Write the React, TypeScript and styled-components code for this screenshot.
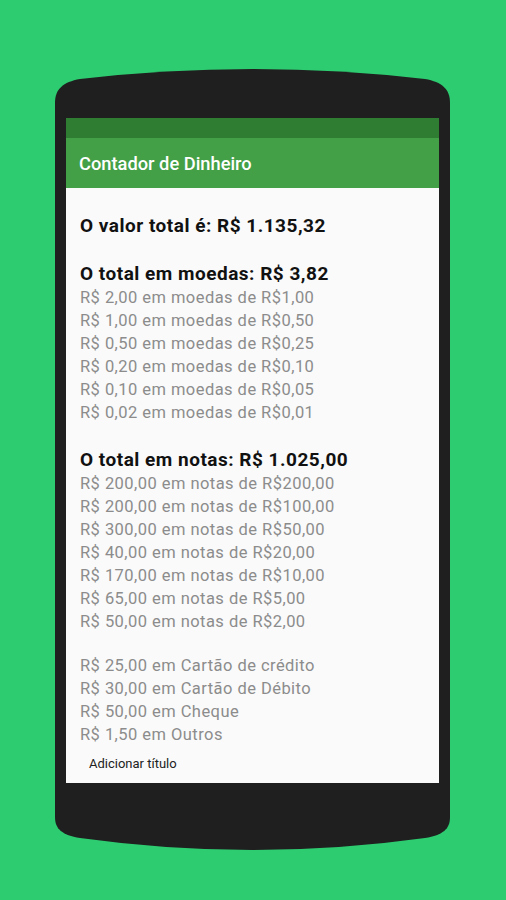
import React from "react";
import styled, { createGlobalStyle } from "styled-components";

const Global = createGlobalStyle`
  html, body { margin: 0; padding: 0; background: #2ecc71; }
  body { font-family: Roboto, "Noto Sans", "Liberation Sans", sans-serif; }
`;

const Page = styled.div`
  width: 506px;
  height: 900px;
  background: #2ecc71;
  padding: 69px 56px 0 55px;
  box-sizing: border-box;
  overflow: hidden;
`;

const Phone = styled.div`
  width: 395px;
  height: 781px;
  background: #1f1f1f;
  clip-path: path("M0,34 C0,20 8,13 25,10 Q197.5,-10 370,10 C387,13 395,20 395,34 L395,748 C395,760 388,766 370,769 Q197.5,793 25,769 C7,766 0,760 0,748 Z");
  padding: 49px 11px 0 11px;
  box-sizing: border-box;
`;

const Screen = styled.div`
  height: 665px;
  display: flex;
  flex-direction: column;
  background: #fafafa;
`;

const StatusBar = styled.div`
  height: 20px;
  background: #2e7d32;
`;

const AppBar = styled.div`
  height: 50px;
  background: #43a047;
  display: flex;
  align-items: center;
  padding-left: 13px;
  color: #ffffff;
  font-size: 18.3px;
  font-weight: 500;
`;

const Content = styled.div`
  padding: 26px 0 0 14px;
  display: flex;
  flex-direction: column;
`;

const Heading = styled.div<{ $gap?: number }>`
  font-size: 19px;
  font-weight: 700;
  letter-spacing: 0.5px;
  line-height: 24px;
  color: #111111;
  margin-top: ${(p) => p.$gap ?? 0}px;
`;

const Group = styled.div<{ $gap?: number }>`
  display: flex;
  flex-direction: column;
  margin-top: ${(p) => p.$gap ?? 0}px;
`;

const Line = styled.div`
  font-size: 16.5px;
  letter-spacing: 0.45px;
  line-height: 23px;
  color: #8c8c8c;
`;

const AddTitle = styled.div`
  font-size: 13px;
  line-height: 18px;
  color: #222222;
  margin: 9px 0 0 9px;
`;

const coins = [
  "R$ 2,00 em moedas de R$1,00",
  "R$ 1,00 em moedas de R$0,50",
  "R$ 0,50 em moedas de R$0,25",
  "R$ 0,20 em moedas de R$0,10",
  "R$ 0,10 em moedas de R$0,05",
  "R$ 0,02 em moedas de R$0,01",
];

const notes = [
  "R$ 200,00 em notas de R$200,00",
  "R$ 200,00 em notas de R$100,00",
  "R$ 300,00 em notas de R$50,00",
  "R$ 40,00 em notas de R$20,00",
  "R$ 170,00 em notas de R$10,00",
  "R$ 65,00 em notas de R$5,00",
  "R$ 50,00 em notas de R$2,00",
];

const others = [
  "R$ 25,00 em Cartão de crédito",
  "R$ 30,00 em Cartão de Débito",
  "R$ 50,00 em Cheque",
  "R$ 1,50 em Outros",
];

export default function App() {
  return (
    <>
      <Global />
      <Page>
        <Phone>
          <Screen>
            <StatusBar />
            <AppBar>Contador de Dinheiro</AppBar>
            <Content>
              <Heading>O valor total é: R$ 1.135,32</Heading>
              <Heading $gap={24}>O total em moedas: R$ 3,82</Heading>
              <Group>
                {coins.map((t) => (
                  <Line key={t}>{t}</Line>
                ))}
              </Group>
              <Heading $gap={24}>O total em notas: R$ 1.025,00</Heading>
              <Group>
                {notes.map((t) => (
                  <Line key={t}>{t}</Line>
                ))}
              </Group>
              <Group $gap={21}>
                {others.map((t) => (
                  <Line key={t}>{t}</Line>
                ))}
              </Group>
              <AddTitle>Adicionar título</AddTitle>
            </Content>
          </Screen>
        </Phone>
      </Page>
    </>
  );
}
